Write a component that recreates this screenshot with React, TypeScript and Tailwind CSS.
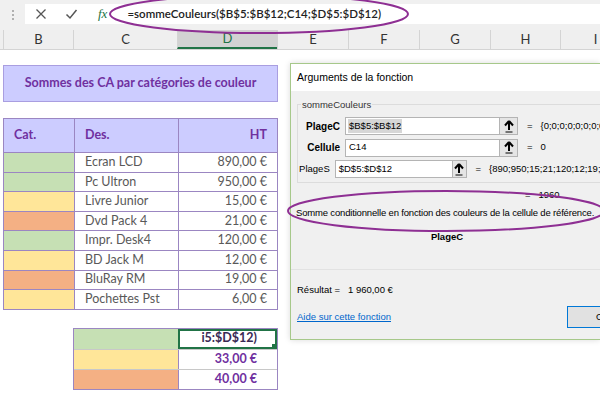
import React from "react";

const cellFont = { fontFamily: "Lato, 'Open Sans', sans-serif" };
const uiFont = { fontFamily: "'Liberation Sans', Arial, sans-serif" };

const rows = [
  { c: "bg-[#c6e0b4]", d: "Ecran LCD", h: "890,00 €" },
  { c: "bg-[#c6e0b4]", d: "Pc Ultron", h: "950,00 €" },
  { c: "bg-[#ffe699]", d: "Livre Junior", h: "15,00 €" },
  { c: "bg-[#f4b084]", d: "Dvd Pack 4", h: "21,00 €" },
  { c: "bg-[#c6e0b4]", d: "Impr. Desk4", h: "120,00 €" },
  { c: "bg-[#ffe699]", d: "BD Jack M", h: "12,00 €" },
  { c: "bg-[#f4b084]", d: "BluRay RM", h: "19,00 €" },
  { c: "bg-[#ffe699]", d: "Pochettes Pst", h: "6,00 €" },
];

const cols = [
  { l: "B", w: "w-[70px]" },
  { l: "C", w: "w-[104px]" },
  { l: "D", w: "w-[100px]", sel: true },
  { l: "E", w: "w-[71px]" },
  { l: "F", w: "w-[71px]" },
  { l: "G", w: "w-[71px]" },
  { l: "H", w: "w-[70px]" },
  { l: "I", w: "w-[70px]" },
];

function ArgRow({ label, bold, value, result, selected }: { label: string; bold?: boolean; value: string; result: string; selected?: boolean }) {
  return (
    <div className="flex h-[18px] items-center">
      <div className={`w-[47px] pr-[5px] text-right text-[9.5px] text-black ${bold ? "font-bold text-[10px]" : ""}`}>{label}</div>
      <div className="flex h-full w-[155px] items-center border border-[#b4b4b4] bg-white pl-[2px] text-[9.5px] text-black">
        <span className={selected ? "bg-[#d6d6d6] px-[1px]" : "px-[1px]"}>{value}</span>
      </div>
      <div className="flex h-full w-[18px] items-center justify-center border border-l-0 border-[#b4b4b4] bg-[#e5e5e5]">
        <svg width="10" height="13" viewBox="0 0 10 13">
          <path d="M5 1 L1 5.5 M5 1 L9 5.5 M5 1 V10" stroke="#000" strokeWidth="2" fill="none" />
          <path d="M1.5 12 H8.5" stroke="#000" strokeWidth="1" />
        </svg>
      </div>
      <div className="whitespace-nowrap pl-[9px] text-[9.5px] text-black">=&nbsp;&nbsp;&nbsp;{result}</div>
    </div>
  );
}

export default function App() {
  return (
    <div className="relative h-[394px] w-[600px] overflow-hidden bg-white" style={cellFont}>
      {/* formula bar */}
      <div className="flex h-[30px] items-start bg-[#f0f0f0] pt-[4px]">
        <div className="flex w-[25px] flex-col items-center gap-[2px] pt-[6px]">
          <span className="h-[2px] w-[2px] bg-[#b0b0b0]" />
          <span className="h-[2px] w-[2px] bg-[#b0b0b0]" />
          <span className="h-[2px] w-[2px] bg-[#b0b0b0]" />
        </div>
        <div className="flex h-[20px] flex-1 items-center bg-white">
          <svg width="12" height="12" viewBox="0 0 12 12" className="ml-[10px]">
            <path d="M1.5 1.5 L10.5 10.5 M10.5 1.5 L1.5 10.5" stroke="#555" strokeWidth="1.3" />
          </svg>
          <svg width="13" height="12" viewBox="0 0 13 12" className="ml-[18px]">
            <path d="M1.5 6.5 L5 10 L11.5 2" stroke="#555" strokeWidth="1.5" fill="none" />
          </svg>
          <span className="ml-[20px] text-[13px] italic text-[#217346]" style={{ fontFamily: "'Liberation Serif', serif" }}>fx</span>
          <span className="ml-[20px] text-[11.5px] font-semibold text-[#222]">=sommeCouleurs($B$5:$B$12;C14;$D$5:$D$12)</span>
        </div>
      </div>

      {/* column headers */}
      <div className="flex h-[20px] border-b border-[#d4d4d4] bg-[#efefef] pl-[3px]">
        {cols.map((c) => (
          <div
            key={c.l}
            className={`${c.w} flex shrink-0 items-center justify-center border-l border-[#d4d4d4] text-[13px] ${
              c.sel ? "border-b-2 border-b-[#217346] bg-[#d2d2d2] text-[#217346]" : "text-[#333]"
            }`}
          >
            {c.l}
          </div>
        ))}
      </div>

      {/* sheet */}
      <div className="flex flex-col pl-[3px] pt-[15px]">
        <div className="flex h-[37px] w-[275px] items-center justify-center border border-[#a99ee0] bg-[#ccccff] text-[12.5px] font-bold text-[#7030a0]">
          Sommes des CA par catégories de couleur
        </div>

        <div className="mt-[16px] w-[275px] border border-[#9b86c2]">
          <div className="flex h-[33px] bg-[#ccccff] text-[12.5px] font-bold text-[#7030a0]">
            <div className="flex w-[70px] items-center pl-[10px]">Cat.</div>
            <div className="flex w-[104px] items-center border-l border-[#9b86c2] pl-[10px]">Des.</div>
            <div className="flex flex-1 items-center justify-end border-l border-[#9b86c2] pr-[10px]">HT</div>
          </div>
          {rows.map((r, i) => (
            <div key={i} className="flex h-[19.6px] border-t border-[#9b86c2] text-[12.5px] text-[#595959]">
              <div className={`w-[70px] ${r.c}`} />
              <div className="flex w-[104px] items-center border-l border-[#9b86c2] pl-[10px]">{r.d}</div>
              <div className="flex flex-1 items-center justify-end border-l border-[#9b86c2] pr-[10px]">{r.h}</div>
            </div>
          ))}
        </div>

        <div className="ml-[70px] mt-[18px] w-[205px] border border-[#9b86c2]">
          <div className="flex h-[20px]">
            <div className="w-[104px] bg-[#c6e0b4]" />
            <div className="relative flex flex-1 items-center justify-end overflow-hidden border-2 border-[#217346] pr-[18px] text-[12.5px] font-bold text-[#3a2a55]">
              <span className="whitespace-nowrap">i5:$D$12)</span>
              <span className="absolute bottom-[-1px] right-[-1px] h-[5px] w-[5px] border border-white bg-[#217346]" />
            </div>
          </div>
          {[
            { c: "bg-[#ffe699]", v: "33,00 €" },
            { c: "bg-[#f4b084]", v: "40,00 €" },
          ].map((r) => (
            <div key={r.v} className="flex h-[20px] border-t border-[#c8c8c8] text-[12.5px] font-bold text-[#7030a0]">
              <div className={`w-[104px] ${r.c}`} />
              <div className="flex flex-1 items-center justify-end border-l border-[#9b86c2] pr-[20px]">{r.v}</div>
            </div>
          ))}
        </div>
      </div>

      {/* dialog */}
      <div
        className="absolute left-[290px] top-[63px] flex h-[277px] w-[310px] flex-col overflow-hidden border border-r-0 border-[#a6c88a] bg-[#f0f0f0] shadow-[0_0_6px_rgba(0,0,0,0.15)]"
        style={uiFont}
      >
        <div className="flex h-[27px] shrink-0 items-center bg-white pl-[6px] text-[10.5px] text-black">Arguments de la fonction</div>
        <div className="relative ml-[6px] mr-[-10px] mt-[13px] flex flex-col gap-[3.5px] border border-[#dcdcdc] pb-[4px] pt-[12px]">
          <span className="absolute left-[3px] top-[-7px] bg-[#f0f0f0] px-[1px] text-[9.5px] text-[#333]">sommeCouleurs</span>
          <ArgRow label="PlageC" bold value="$B$5:$B$12" result="{0;0;0;0;0;0;0;0}" selected />
          <ArgRow label="Cellule" bold value="C14" result="0" />
          <ArgRow label="PlageS" value="$D$5:$D$12" result="{890;950;15;21;120;12;19;6}" />
        </div>
        <div className="mt-[5px] pl-[234px] text-[9.5px] text-black">=&nbsp;&nbsp;&nbsp;1960</div>
        <div className="mt-[4px] whitespace-nowrap pl-[5px] text-[9.5px] tracking-[-0.17px] text-black">
          Somme conditionnelle en fonction des couleurs de la cellule de référence.
        </div>
        <div className="mt-[9px] w-[312px] text-center text-[9.5px] font-bold text-black">PlageC</div>
        <div className="mt-[25px] border-t border-[#e2e2e2]" />
        <div className="mt-[13px] pl-[6px] text-[9.5px] text-black">Résultat =&nbsp;&nbsp;&nbsp;1 960,00 €</div>
        <div className="mt-[9px] flex items-center justify-between">
          <span className="pl-[6px] text-[9.5px] text-[#0066cc] underline">Aide sur cette fonction</span>
          <div className="flex h-[22px] w-[33px] items-center border border-r-0 border-[#0078d7] bg-[#e1e1e1] pl-[28px] text-[9.5px] text-black">O</div>
        </div>
      </div>

      {/* annotation ellipses */}
      <svg className="pointer-events-none absolute left-0 top-0" width="600" height="394">
        <ellipse cx="259" cy="14" rx="149" ry="19" fill="none" stroke="#8e2f93" strokeWidth="2" />
        <ellipse cx="446" cy="211" rx="158" ry="20" fill="none" stroke="#8e2f93" strokeWidth="2" />
      </svg>
    </div>
  );
}
